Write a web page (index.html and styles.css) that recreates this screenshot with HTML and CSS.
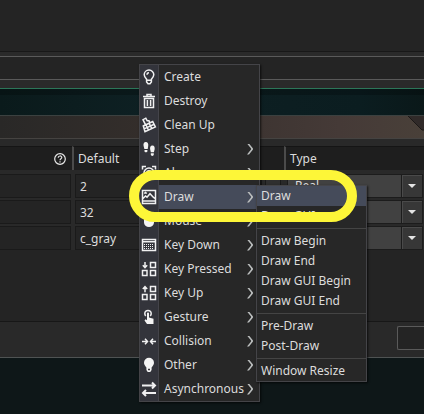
FILE: index.html
```html
<!DOCTYPE html>
<html lang="en">
<head>
<meta charset="utf-8">
<meta name="viewport" content="width=device-width, initial-scale=1">
<title>Object events</title>
<link rel="stylesheet" href="styles.css">
</head>
<body>
<div class="workspace">
  <section class="events">
    <div class="event-list"></div>
    <div class="event-bar"><button class="add-event" type="button">Add Event</button></div>
  </section>

  <section class="variables">
    <header class="title-bar">
      <svg class="corner" viewBox="0 0 16 22" aria-hidden="true"><path d="M0 0H16V14H14Z" fill="#302a29"/><path d="M0 0L14 14H16" fill="none" stroke="#1b1817"/></svg>
    </header>
    <table class="grid">
      <colgroup><col class="col-name"><col class="col-default"><col class="col-type"></colgroup>
      <thead>
        <tr>
          <th><svg class="help" viewBox="0 0 12 12" aria-label="Help"><circle cx="6" cy="6" r="5.3"/><path d="M4.2 4.8C4.2 2.4 7.8 2.4 7.8 4.6C7.8 5.8 6 5.8 6 7.3M6 8.3V9.5"/></svg></th>
          <th>Default</th>
          <th>Type</th>
        </tr>
      </thead>
      <tbody>
        <tr>
          <td><input type="text" aria-label="Name 1"></td>
          <td><div class="value"><input type="text" value="2" aria-label="Default 1"><button type="button" aria-label="Edit 1"></button></div></td>
          <td><div class="pick"><select aria-label="Type 1"><option>Real</option></select><span class="drop"></span></div></td>
        </tr>
        <tr>
          <td><input type="text" aria-label="Name 2"></td>
          <td><div class="value"><input type="text" value="32" aria-label="Default 2"><button type="button" aria-label="Edit 2"></button></div></td>
          <td><div class="pick"><select aria-label="Type 2"><option>Real</option></select><span class="drop"></span></div></td>
        </tr>
        <tr>
          <td><input type="text" aria-label="Name 3"></td>
          <td><div class="value"><input type="text" value="c_gray" aria-label="Default 3"><button type="button" aria-label="Edit 3"></button></div></td>
          <td><div class="pick"><select aria-label="Type 3"><option>Real</option></select><span class="drop"></span></div></td>
        </tr>
      </tbody>
    </table>
    <footer class="actions"><button type="button" aria-label="Add"></button></footer>
  </section>
</div>

<nav class="menu main-menu" aria-label="Events">
  <button type="button"><svg viewBox="0 0 16 16"><path d="M5.6 10.2C4.4 8.8 3.2 7.4 3.2 5.8A4.8 4.8 0 0 1 12.8 5.8C12.8 7.4 11.6 8.8 10.4 10.2V13L9 14.8H7L5.6 13ZM6 11.3H10M6 5.8A2.1 2.1 0 0 1 8 3.7"/></svg><span>Create</span></button>
  <button type="button"><svg viewBox="0 0 16 16"><path d="M2 3.5H14M6 3.3V1.5H10V3.3M3.5 5.5V14.5H12.5V5.5ZM6.4 7V13M9.6 7V13"/></svg><span>Destroy</span></button>
  <button type="button"><svg viewBox="0 0 16 16"><path d="M2.3 9L4 14.8L14.4 10L11.7 4.6ZM3.1 11.9L13.2 7.3M5 7.8L7.4 13.1M8.2 6.4L10.8 11.6M4.6 7.8L2 2.7L4.8 1.2L6.2 3.8L8 3.8L8.8 5.8"/></svg><span>Clean Up</span></button>
  <button type="button" class="has-sub"><svg viewBox="0 0 16 16" class="solid"><path d="M4.8 1C6.8 1 7.6 3 7.2 5L6.7 8H3.4L2.6 5C2.1 3 2.9 1 4.8 1ZM3.5 9H6.4V10.2C6.4 11.6 3.5 11.6 3.5 10.2ZM11.4 4.5C13.4 4.5 14 6.6 13.6 8.4L12.9 11.2H9.8L9.2 8.4C8.7 6.4 9.4 4.5 11.4 4.5ZM9.8 12.3H12.8V13.6C12.8 15.3 9.8 15.3 9.8 13.6Z"/></svg><span>Step</span></button>
  <button type="button" class="has-sub"><svg viewBox="0 0 16 16"><circle cx="8" cy="8" r="5"/><circle cx="8" cy="8" r="2.3"/><path d="M1.5 4.5V1.5H5M14.5 4.5V1.5H11M4.5 12.5L3 14.5M11.5 12.5L13 14.5"/></svg><span>Alarm</span></button>
  <button type="button" class="has-sub current"><svg viewBox="0 0 16 16"><path d="M1.5 1.5H14.5V14.5H1.5ZM1.5 12H14.5M2 9.5L4.5 7L6 8.2L9 4.7L12.5 8.5L14.3 9.5M3.2 4.5L4.5 3.4L5.8 4.5"/></svg><span>Draw</span></button>
  <button type="button" class="has-sub"><svg viewBox="0 0 16 16" class="solid"><path d="M3 6.5A5 5 0 0 1 13 6.5V9.5A5 4.5 0 0 1 3 9.5Z"/></svg><span>Mouse</span></button>
  <button type="button" class="has-sub"><svg viewBox="0 0 16 16"><path d="M1.5 2.5H14.5V13.5H1.5ZM1.5 4.7H14.5"/><path class="dots" d="M3 7.5H13M3 9.5H13M3 11.5H13"/></svg><span>Key Down</span></button>
  <button type="button" class="has-sub"><svg viewBox="0 0 16 16"><path d="M1.5 9.5H6V14.5H1.5ZM9.5 9.5H14.5V14.5H9.5ZM9.5 1.5H14.5V6.5H9.5ZM4 1V6.5M1.8 4.3L4 6.6L6.2 4.3"/></svg><span>Key Pressed</span></button>
  <button type="button" class="has-sub"><svg viewBox="0 0 16 16"><path d="M1.5 9.5H6V14.5H1.5ZM9.5 9.5H14.5V14.5H9.5ZM9.5 1.5H14.5V6.5H9.5ZM4 7.2V1.8M1.8 4L4 1.7L6.2 4"/></svg><span>Key Up</span></button>
  <button type="button" class="has-sub"><svg viewBox="0 0 16 16"><path d="M4.8 6.9A3.2 3.2 0 1 1 9.2 6.9"/><path class="fill" d="M6 4.5C6 3.3 8 3.3 8 4.5V8.5L12.5 9.7V15H6L3.5 11.5L4.5 10.3L6 11.2Z"/></svg><span>Gesture</span></button>
  <button type="button" class="has-sub"><svg viewBox="0 0 16 16"><path d="M1 8.5H6.5M15 8.5H9.5M4 5.7L6.5 8.5L4 11.3M12 5.7L9.5 8.5L12 11.3"/></svg><span>Collision</span></button>
  <button type="button" class="has-sub"><svg viewBox="0 0 16 16" class="solid"><path d="M5.4 10.5C4 8.8 3 7.5 3 5.8A5 5 0 0 1 13 5.8C13 7.5 12 8.8 10.6 10.5V13L9.3 15H6.7L5.4 13Z"/><path d="M7 12.5H9" stroke="#38383f"/></svg><span>Other</span></button>
  <button type="button" class="has-sub"><svg viewBox="0 0 16 16" class="heavy"><path d="M1 4.5H14M11 1.5L14 4.5L11 7.5M15 12H2M5 9L2 12L5 15"/></svg><span>Asynchronous</span></button>
</nav>

<nav class="menu sub-menu" aria-label="Draw events">
  <button type="button" class="current">Draw</button>
  <button type="button">Draw GUI</button>
  <hr>
  <button type="button">Draw Begin</button>
  <button type="button">Draw End</button>
  <button type="button">Draw GUI Begin</button>
  <button type="button">Draw GUI End</button>
  <hr>
  <button type="button">Pre-Draw</button>
  <button type="button">Post-Draw</button>
  <hr>
  <button type="button">Window Resize</button>
</nav>
<div class="highlight"></div>
</body>
</html>
```
FILE: styles.css
```css
* { box-sizing: border-box; }

body {
  margin: 0;
  color: #dcdcdc;
  background: #0e1718;
  font: 12px/16px "Noto Sans", "Open Sans", sans-serif;
  overflow: hidden;
}

button, input, select {
  margin: 0;
  padding: 0;
  border: 0;
  border-radius: 0;
  background: none;
  color: inherit;
  font: inherit;
}

.workspace {
  min-height: 100vh;
  display: flex;
  flex-direction: column;
  border-bottom: 1px solid #050808;
  background: linear-gradient(90deg, #0a1a1b, #0e2023 35%, #0b1d20 85%, #0a1819);
}

.events {
  background: #2a2a2a;
  border-bottom: 1px solid #2c7658;
  box-shadow: 0 6px 0 #00000038;
}
.event-list { height: 52px; background: #242424; border-bottom: 1px solid #181818; }
.event-bar { padding: 4px 0 8px; }
.add-event {
  display: block;
  width: 100%;
  height: 24px;
  padding: 3px 0 0 146px;
  text-align: left;
  background: #242424;
  border-top: 1px solid #5a5a5a;
  border-bottom: 1px solid #5a5a5a;
}

.variables {
  margin-top: 26px;
  background: #242424;
  border-top: 1px solid #3b4140;
  border-bottom: 1px solid #4f5353;
  box-shadow: 0 56px 0 #0e1718;
}
.title-bar {
  height: 23px;
  display: flex;
  justify-content: flex-end;
  border-bottom: 1px solid #454341;
  background: linear-gradient(90deg, #292827, #342e2b 35%, #453a37 80%, #494039);
}
.corner { width: 16px; height: 22px; }

.grid {
  width: 100%;
  border-top: 7px solid #292929;
  border-collapse: separate;
  border-spacing: 0;
  table-layout: fixed;
}
.col-name { width: 72px; }
.col-default { width: 212px; }
th {
  height: 24px;
  padding: 0 4px;
  text-align: left;
  font-weight: normal;
  background: #1e1e1e;
  border-top: 1px solid #151515;
}
th + th { border-left: 2px solid #4b4b4b; }
th:first-child { text-align: right; padding-right: 6px; }
.help {
  width: 12px;
  height: 12px;
  display: inline-block;
  vertical-align: middle;
  fill: none;
  stroke: #e8e8e8;
  stroke-width: 1.2;
}
td { height: 26px; padding: 2px 1px 0 3px; background: #292929; }
td:first-child { padding-left: 0; }
tbody tr:first-child td { height: 28px; padding-top: 4px; }
td input {
  display: block;
  width: 100%;
  height: 24px;
  padding: 0 4px;
  background: #242424;
  border: 1px solid #1a1a1a;
}
td:first-child input { border-left: 0; }
.value { display: flex; gap: 3px; padding-right: 2px; }
.value input { flex: 1; min-width: 0; }
.value button { width: 16px; background: #2f2f2f; border: 1px solid #1a1a1a; }
.pick { display: flex; position: relative; }
.pick select {
  appearance: none;
  width: 100%;
  height: 24px;
  padding: 0 28px 0 7px;
  background: #414141;
  border: 1px solid #1c1c1c;
}
.drop {
  position: absolute;
  inset: 0 0 0 auto;
  width: 22px;
  display: grid;
  place-items: center;
  background: #373737;
  border: 1px solid #1c1c1c;
  box-shadow: inset 1px 1px #4a4a4a;
  pointer-events: none;
}
.drop::after {
  content: "";
  border: 4px solid transparent;
  border-top-color: #e4e4e4;
  border-bottom: 0;
}

.actions {
  height: 36px;
  margin-top: 71px;
  padding: 4px 0 0;
  display: flex;
  justify-content: flex-end;
  background: #292929;
  border-top: 1px solid #171717;
}
.actions button {
  width: 27px;
  height: 24px;
  background: #242424;
  border: 1px solid #5a5a5a;
  border-right: 0;
  border-radius: 2px 0 0 2px;
}

.menu {
  position: absolute;
  display: flex;
  flex-direction: column;
  background: #272727;
  border: 1px solid #444448;
  box-shadow: 1px 1px 2px #000000b0;
}
.menu button { display: flex; align-items: center; text-align: left; white-space: nowrap; }

.main-menu {
  left: 139px;
  top: 64px;
  width: 121px;
  background: linear-gradient(90deg, #33343b 18px, #44444a 18px, #44444a 19px, #272727 19px);
}
.main-menu button { height: 24px; padding-left: 1px; }
.main-menu svg {
  width: 16px;
  height: 16px;
  margin-right: 2px;
  flex: none;
  fill: none;
  stroke: #f0f0f1;
  stroke-width: 1.5;
}
.main-menu .solid, .main-menu .fill { fill: #f4f4f4; stroke: none; }
.main-menu .heavy { stroke-width: 2; }
.main-menu .dots { stroke-width: 1; stroke-dasharray: 1 1; }
.main-menu span { flex: 1; height: 24px; padding-left: 5px; line-height: 24px; }
.main-menu .has-sub span { display: flex; align-items: center; justify-content: space-between; padding-right: 6px; }
.has-sub span::after {
  content: "";
  flex: none;
  width: 6px;
  height: 11px;
  background: #b9bcbc;
  clip-path: polygon(0 0, 2px 0, 6px 5px, 6px 6px, 2px 11px, 0 11px, 4px 6px, 4px 5px);
}
.main-menu .current span, .sub-menu .current { background: #454b5a; }

.sub-menu { left: 256px; top: 185px; width: 111px; }
.sub-menu button { height: 20px; padding-left: 4px; }
.sub-menu hr { width: 100%; height: 1px; margin: 2px 0; border: 0; background: #444; }

.highlight {
  position: absolute;
  left: 129px;
  top: 170px;
  width: 228px;
  height: 52px;
  border: 10px solid #fdf638;
  border-radius: 26px;
  pointer-events: none;
}
```
